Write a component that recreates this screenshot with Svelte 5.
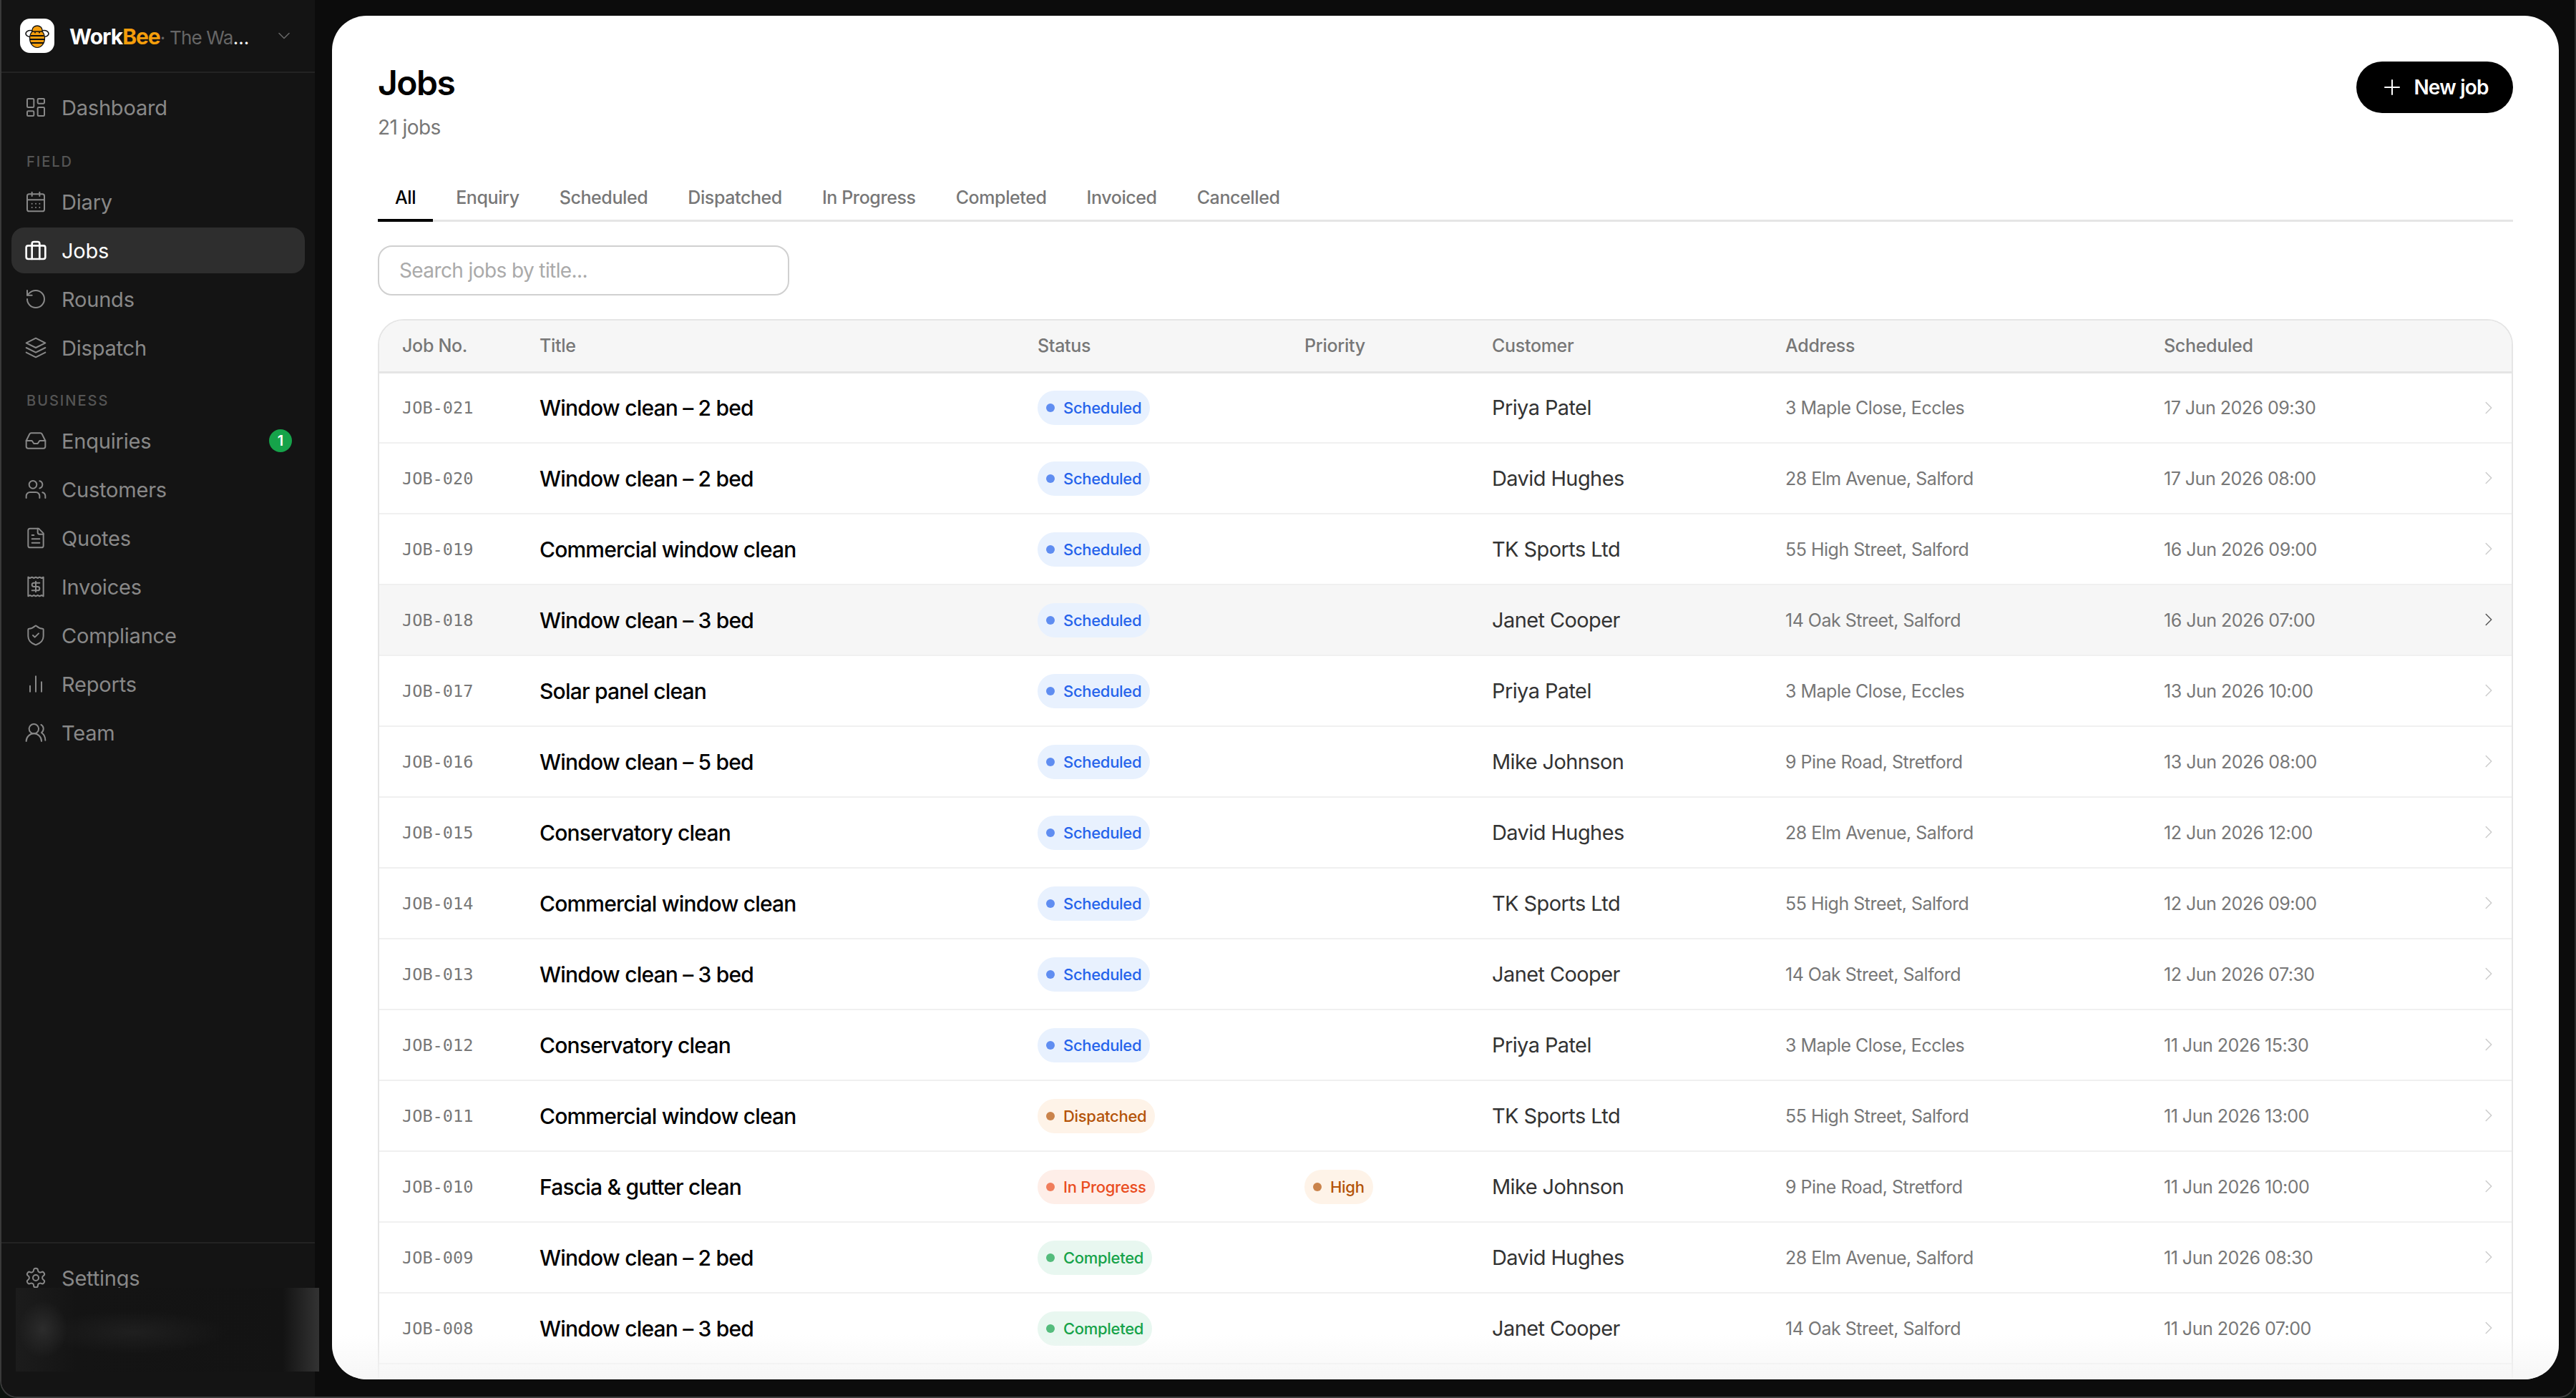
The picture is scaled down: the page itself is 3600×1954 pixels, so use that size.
<script>
  const icons = {
    dashboard: '<rect x="3" y="3" width="7" height="9" rx="1"/><rect x="14" y="3" width="7" height="5" rx="1"/><rect x="14" y="12" width="7" height="9" rx="1"/><rect x="3" y="16" width="7" height="5" rx="1"/>',
    diary: '<path d="M8 2v4M16 2v4"/><rect x="3" y="4" width="18" height="18" rx="2"/><path d="M3 10h18M8 14h.01M12 14h.01M16 14h.01M8 18h.01M12 18h.01M16 18h.01"/>',
    jobs: '<rect x="2" y="7" width="20" height="14" rx="2"/><path d="M16 21V5a2 2 0 0 0-2-2h-4a2 2 0 0 0-2 2v16"/>',
    rounds: '<path d="M3 12a9 9 0 1 0 9-9 9.75 9.75 0 0 0-6.74 2.74L3 8"/><path d="M3 3v5h5"/>',
    dispatch: '<path d="M12 2 2 7l10 5 10-5-10-5Z"/><path d="m2 17 10 5 10-5"/><path d="m2 12 10 5 10-5"/>',
    enquiries: '<polyline points="22 12 16 12 14 15 10 15 8 12 2 12"/><path d="M5.45 5.11 2 12v6a2 2 0 0 0 2 2h16a2 2 0 0 0 2-2v-6l-3.45-6.89A2 2 0 0 0 16.76 4H7.24a2 2 0 0 0-1.79 1.11z"/>',
    customers: '<path d="M16 21v-2a4 4 0 0 0-4-4H6a4 4 0 0 0-4 4v2"/><circle cx="9" cy="7" r="4"/><path d="M22 21v-2a4 4 0 0 0-3-3.87"/><path d="M16 3.13a4 4 0 0 1 0 7.75"/>',
    quotes: '<path d="M15 2H6a2 2 0 0 0-2 2v16a2 2 0 0 0 2 2h12a2 2 0 0 0 2-2V7Z"/><path d="M14 2v4a2 2 0 0 0 2 2h4"/><path d="M10 9H8M16 13H8M16 17H8"/>',
    invoices: '<path d="M4 2v20l2-1 2 1 2-1 2 1 2-1 2 1 2-1 2 1V2l-2 1-2-1-2 1-2-1-2 1-2-1-2 1Z"/><path d="M16 8h-6a2 2 0 1 0 0 4h4a2 2 0 1 1 0 4H8"/><path d="M12 17.5v-11"/>',
    compliance: '<path d="M20 13c0 5-3.5 7.5-7.66 8.95a1 1 0 0 1-.67-.01C7.5 20.5 4 18 4 13V6a1 1 0 0 1 1-1c2 0 4.5-1.2 6.24-2.72a1.17 1.17 0 0 1 1.52 0C14.51 3.81 17 5 19 5a1 1 0 0 1 1 1z"/><path d="m9 12 2 2 4-4"/>',
    reports: '<path d="M18 20V10M12 20V4M6 20v-6"/>',
    team: '<path d="M18 21a8 8 0 0 0-16 0"/><circle cx="10" cy="8" r="5"/><path d="M22 20c0-3.37-2-6.5-4-8a5 5 0 0 0-.45-8.3"/>',
    settings: '<path d="M12.22 2h-.44a2 2 0 0 0-2 2v.18a2 2 0 0 1-1 1.73l-.43.25a2 2 0 0 1-2 0l-.15-.08a2 2 0 0 0-2.73.73l-.22.38a2 2 0 0 0 .73 2.73l.15.1a2 2 0 0 1 1 1.72v.51a2 2 0 0 1-1 1.74l-.15.09a2 2 0 0 0-.73 2.73l.22.38a2 2 0 0 0 2.73.73l.15-.08a2 2 0 0 1 2 0l.43.25a2 2 0 0 1 1 1.73V20a2 2 0 0 0 2 2h.44a2 2 0 0 0 2-2v-.18a2 2 0 0 1 1-1.73l.43-.25a2 2 0 0 1 2 0l.15.08a2 2 0 0 0 2.73-.73l.22-.39a2 2 0 0 0-.73-2.73l-.15-.08a2 2 0 0 1-1-1.74v-.5a2 2 0 0 1 1-1.74l.15-.09a2 2 0 0 0 .73-2.73l-.22-.38a2 2 0 0 0-2.73-.73l-.15.08a2 2 0 0 1-2 0l-.43-.25a2 2 0 0 1-1-1.73V4a2 2 0 0 0-2-2z"/><circle cx="12" cy="12" r="3"/>'
  };

  const fieldNav = [
    { id: "diary", label: "Diary" },
    { id: "jobs", label: "Jobs", active: true },
    { id: "rounds", label: "Rounds" },
    { id: "dispatch", label: "Dispatch" }
  ];
  const businessNav = [
    { id: "enquiries", label: "Enquiries", badge: 1 },
    { id: "customers", label: "Customers" },
    { id: "quotes", label: "Quotes" },
    { id: "invoices", label: "Invoices" },
    { id: "compliance", label: "Compliance" },
    { id: "reports", label: "Reports" },
    { id: "team", label: "Team" }
  ];

  const tabs = ["All", "Enquiry", "Scheduled", "Dispatched", "In Progress", "Completed", "Invoiced", "Cancelled"];

  const addr = {
    "Priya Patel": "3 Maple Close, Eccles",
    "David Hughes": "28 Elm Avenue, Salford",
    "TK Sports Ltd": "55 High Street, Salford",
    "Janet Cooper": "14 Oak Street, Salford",
    "Mike Johnson": "9 Pine Road, Stretford"
  };

  const jobs = [
    ["JOB-021", "Window clean – 2 bed", "Scheduled", "", "Priya Patel", "17 Jun 2026 09:30"],
    ["JOB-020", "Window clean – 2 bed", "Scheduled", "", "David Hughes", "17 Jun 2026 08:00"],
    ["JOB-019", "Commercial window clean", "Scheduled", "", "TK Sports Ltd", "16 Jun 2026 09:00"],
    ["JOB-018", "Window clean – 3 bed", "Scheduled", "", "Janet Cooper", "16 Jun 2026 07:00"],
    ["JOB-017", "Solar panel clean", "Scheduled", "", "Priya Patel", "13 Jun 2026 10:00"],
    ["JOB-016", "Window clean – 5 bed", "Scheduled", "", "Mike Johnson", "13 Jun 2026 08:00"],
    ["JOB-015", "Conservatory clean", "Scheduled", "", "David Hughes", "12 Jun 2026 12:00"],
    ["JOB-014", "Commercial window clean", "Scheduled", "", "TK Sports Ltd", "12 Jun 2026 09:00"],
    ["JOB-013", "Window clean – 3 bed", "Scheduled", "", "Janet Cooper", "12 Jun 2026 07:30"],
    ["JOB-012", "Conservatory clean", "Scheduled", "", "Priya Patel", "11 Jun 2026 15:30"],
    ["JOB-011", "Commercial window clean", "Dispatched", "", "TK Sports Ltd", "11 Jun 2026 13:00"],
    ["JOB-010", "Fascia & gutter clean", "In Progress", "High", "Mike Johnson", "11 Jun 2026 10:00"],
    ["JOB-009", "Window clean – 2 bed", "Completed", "", "David Hughes", "11 Jun 2026 08:30"],
    ["JOB-008", "Window clean – 3 bed", "Completed", "", "Janet Cooper", "11 Jun 2026 07:00"],
    ["JOB-007", "Window clean – 2 bed", "Completed", "", "Priya Patel", "10 Jun 2026 09:00"]
  ];

  const tone = { Scheduled: "blue", Dispatched: "amber", "In Progress": "red", Completed: "green", High: "amber" };
</script>

{#snippet icon(id)}
  <svg class="nav-icon" viewBox="0 0 24 24" fill="none" stroke="currentColor" stroke-width="1.5" stroke-linecap="round" stroke-linejoin="round">{@html icons[id]}</svg>
{/snippet}

{#snippet navItem(item)}
  <div class="nav-item" class:active={item.active}>
    {@render icon(item.id)}
    <span>{item.label}</span>
    {#if item.badge}<b class="nav-badge">{item.badge}</b>{/if}
  </div>
{/snippet}

<div class="app">
  <aside class="sidebar">
    <div class="brand">
      <div class="logo">
        <svg viewBox="0 0 48 48" width="48" height="48">
          <ellipse cx="14.5" cy="21" rx="6.5" ry="4.5" fill="#fff" stroke="#111" stroke-width="1.6" />
          <ellipse cx="33.5" cy="21" rx="6.5" ry="4.5" fill="#fff" stroke="#111" stroke-width="1.6" />
          <ellipse cx="24" cy="27.5" rx="10.5" ry="13" fill="#f59e0b" stroke="#111" stroke-width="1.2" />
          <path d="M14.5 24h19M13.6 29h20.8M15 34h18" stroke="#111" stroke-width="2.2" />
          <path d="M17 16a7 6 0 0 1 14 0v2H17z" fill="#f59e0b" stroke="#111" stroke-width="1.4" />
          <circle cx="21" cy="19.5" r="1" fill="#111" /><circle cx="27" cy="19.5" r="1" fill="#111" />
        </svg>
      </div>
      <div class="brand-name"><strong>Work<em>Bee</em></strong><span> · The Wash Company</span></div>
      <svg class="brand-caret" viewBox="0 0 16 10" fill="none" stroke="currentColor" stroke-width="1.6" stroke-linecap="round" stroke-linejoin="round"><path d="m1 1.5 7 7 7-7" /></svg>
    </div>

    <nav class="nav">
      {@render navItem({ id: "dashboard", label: "Dashboard" })}
      <div class="nav-label field">FIELD</div>
      {#each fieldNav as item}{@render navItem(item)}{/each}
      <div class="nav-label">BUSINESS</div>
      {#each businessNav as item}{@render navItem(item)}{/each}
    </nav>

    <div class="side-foot">
      {@render navItem({ id: "settings", label: "Settings" })}
      <div class="copyright">© 2026 Xymer Ltd</div>
      <div class="redacted"></div>
    </div>
  </aside>

  <main class="content">
    <header class="page-head">
      <div>
        <h1>Jobs</h1>
        <p>21 jobs</p>
      </div>
      <button class="new-job">
        <svg viewBox="0 0 24 24" width="24" height="24" fill="none" stroke="currentColor" stroke-width="2" stroke-linecap="round"><path d="M12 2v20M2 12h20" /></svg>
        New job
      </button>
    </header>

    <div class="tabs">
      {#each tabs as tab, i}
        <div class="tab" class:current={i === 0}>{tab}</div>
      {/each}
    </div>

    <input class="search" placeholder="Search jobs by title..." />

    <div class="table-wrap">
      <table>
        <colgroup>
          <col style="width:192px" /><col style="width:696px" /><col style="width:373px" /><col style="width:262px" />
          <col style="width:410px" /><col style="width:529px" /><col />
        </colgroup>
        <thead>
          <tr><th>Job No.</th><th>Title</th><th>Status</th><th>Priority</th><th>Customer</th><th>Address</th><th>Scheduled</th></tr>
        </thead>
        <tbody>
          {#each jobs as [no, title, status, priority, customer, when]}
            <tr class:hover={no === "JOB-018"}>
              <td class="no">{no}</td>
              <td class="title">{title}</td>
              <td><span class="pill {tone[status]}"><i></i>{status}</span></td>
              <td>{#if priority}<span class="pill {tone[priority]}"><i></i>{priority}</span>{/if}</td>
              <td class="customer">{customer}</td>
              <td class="muted">{addr[customer]}</td>
              <td class="muted when">
                {when}
                <svg class="chev" viewBox="0 0 14 24" fill="none" stroke="currentColor" stroke-width="1.8" stroke-linecap="round" stroke-linejoin="round"><path d="m2.5 3 9 9-9 9" /></svg>
              </td>
            </tr>
          {/each}
        </tbody>
      </table>
    </div>
    <div class="fade"></div>
  </main>
</div>

<style>
  :global(body) {
    margin: 0;
    background: #0c130e;
  }

  .app {
    position: relative;
    display: flex;
    width: 3600px;
    height: 1954px;
    box-sizing: border-box;
    overflow: hidden;
    border: 2px solid #3a3a3a;
    border-top: 0;
    border-right-color: #2a2a2a;
    border-radius: 0 0 24px 24px;
    background: #0c0c0c;
    font-family: Inter, "Liberation Sans", sans-serif;
  }

  .sidebar {
    flex: none;
    width: 438px;
    display: flex;
    flex-direction: column;
    background: #141414;
    color: #888;
  }

  .brand {
    flex: none;
    height: 102px;
    box-sizing: border-box;
    padding: 26px 32px 0 26px;
    display: flex;
    align-items: flex-start;
    border-bottom: 2px solid #232323;
  }

  .logo {
    width: 48px;
    height: 48px;
    flex: none;
    border-radius: 14px;
    background: #fff;
  }

  .brand-name {
    width: 260px;
    margin-left: 21px;
    white-space: nowrap;
    overflow: hidden;
    text-overflow: ellipsis;
    line-height: 50px;
    color: #fff;
    font-size: 26px;
    letter-spacing: -0.8px;
  }

  .brand-name strong {
    font-size: 30px;
    font-weight: 700;
    letter-spacing: -1px;
  }

  .brand-name em {
    font-style: normal;
    color: #f59e0b;
  }

  .brand-name span {
    color: #666;
  }

  .brand-caret {
    width: 16px;
    height: 10px;
    margin: 19px 0 0 32px;
    color: #666;
  }

  .nav {
    flex: 1;
    padding: 16px 14px 0;
    display: flex;
    flex-direction: column;
    gap: 4px;
  }

  .nav-item {
    position: relative;
    height: 64px;
    flex: none;
    padding-left: 18px;
    display: flex;
    align-items: center;
    gap: 20px;
    border-radius: 18px;
    font-size: 29px;
    letter-spacing: -0.2px;
  }

  .nav-item.active {
    background: #2e2e2e;
    color: #fff;
  }

  .nav-item.active .nav-icon {
    stroke-width: 2;
  }

  .nav-icon {
    width: 32px;
    height: 32px;
    flex: none;
  }

  .nav-badge {
    position: absolute;
    right: 18px;
    top: 16px;
    width: 32px;
    height: 32px;
    border-radius: 50%;
    display: grid;
    place-items: center;
    background: #16a34a;
    color: #fff;
    font-size: 20px;
    font-weight: 600;
  }

  .nav-label {
    padding: 26px 0 8px 21px;
    color: #555;
    font-size: 20px;
    font-weight: 500;
    letter-spacing: 2px;
    line-height: 24px;
  }

  .nav-label.field {
    padding-top: 28px;
  }

  .side-foot {
    position: relative;
    height: 216px;
    flex: none;
    box-sizing: border-box;
    padding: 16px 14px 0;
    border-top: 2px solid #232323;
  }

  .copyright {
    margin: 43px 0 0 21px;
    color: #4a4a4a;
    font-size: 21px;
    line-height: 28px;
  }

  .redacted {
    position: absolute;
    left: 20px;
    top: 62px;
    width: 424px;
    height: 117px;
    background:
      radial-gradient(ellipse 34px 40px at 38px 58px, #2c2c2c, transparent),
      radial-gradient(ellipse 130px 30px at 165px 62px, #1f1f1f, transparent),
      linear-gradient(90deg, #1c1c1c, #141414 20%, #131313 88%, #333);
  }

  .content {
    position: absolute;
    left: 462px;
    top: 22px;
    width: 3112px;
    height: 1906px;
    box-sizing: border-box;
    padding: 64px 64px 0;
    overflow: hidden;
    border-radius: 48px;
    background: #fff;
    color: #000;
  }

  .page-head {
    display: flex;
    justify-content: space-between;
    align-items: flex-start;
    height: 156px;
  }

  h1 {
    margin: 0;
    font-size: 48px;
    line-height: 60px;
    font-weight: 600;
    letter-spacing: -1.5px;
  }

  .page-head p {
    margin: 14px 0 0;
    font-size: 28px;
    line-height: 36px;
    color: #777;
    letter-spacing: -0.6px;
  }

  .new-job {
    width: 219px;
    height: 72px;
    padding: 0 0 0 4px;
    display: flex;
    align-items: center;
    justify-content: center;
    gap: 18px;
    border: 0;
    border-radius: 36px;
    background: #000;
    color: #fff;
    font: 600 28px Inter, sans-serif;
    letter-spacing: -0.8px;
  }

  .tabs {
    display: flex;
    gap: 8px;
    height: 68px;
    box-sizing: border-box;
    border-bottom: 3px solid #e5e5e5;
  }

  .tab {
    height: 68px;
    box-sizing: border-box;
    padding: 14px 24px 0;
    font-size: 25px;
    line-height: 40px;
    font-weight: 500;
    letter-spacing: -0.4px;
    color: #777;
  }

  .tab.current {
    color: #000;
    border-bottom: 4px solid #000;
  }

  .search {
    display: block;
    width: 575px;
    height: 70px;
    box-sizing: border-box;
    margin: 33px 0;
    padding: 0 28px;
    border: 2px solid #d0d0d0;
    border-radius: 20px;
    font: 400 28px Inter, sans-serif;
    letter-spacing: -0.6px;
    outline: none;
  }

  .search::placeholder {
    color: #aaa;
  }

  .table-wrap {
    border: 2px solid #e5e5e5;
    border-radius: 36px 36px 0 0;
    overflow: hidden;
  }

  table {
    width: 100%;
    table-layout: fixed;
    border-collapse: collapse;
  }

  th {
    height: 72px;
    padding: 0 0 0 32px;
    box-sizing: border-box;
    text-align: left;
    background: #f6f6f6;
    border-bottom: 3px solid #e5e5e5;
    color: #777;
    font-size: 25px;
    font-weight: 500;
    letter-spacing: -0.3px;
  }

  td {
    height: 99px;
    padding: 0 0 0 32px;
    box-sizing: border-box;
    border-bottom: 2px solid #f0f0f0;
    white-space: nowrap;
    vertical-align: middle;
  }

  tr.hover td {
    background: #f6f6f6;
  }

  .no {
    font-family: "DejaVu Sans Mono", monospace;
    font-size: 23.6px;
    color: #777;
  }

  .title {
    font-size: 30px;
    font-weight: 500;
    letter-spacing: -0.8px;
  }

  .customer {
    font-size: 29px;
    color: #333;
    letter-spacing: -0.6px;
  }

  .muted {
    font-size: 25px;
    color: #777;
    letter-spacing: -0.5px;
  }

  .when {
    position: relative;
  }

  .chev {
    position: absolute;
    right: 26px;
    top: 38px;
    width: 12px;
    height: 20px;
    color: #ccc;
  }

  tr.hover .chev {
    color: #555;
  }

  .pill {
    display: inline-flex;
    align-items: center;
    gap: 12px;
    height: 48px;
    padding: 0 12px;
    border-radius: 24px;
    font-size: 22px;
    font-weight: 500;
    letter-spacing: -0.3px;
  }

  .pill i {
    width: 12px;
    height: 12px;
    border-radius: 50%;
    background: currentColor;
    opacity: 0.7;
  }

  .blue { background: #e8f1fe; color: #2563eb; }
  .amber { background: #fef3e8; color: #b45309; }
  .red { background: #feeee8; color: #ea4d1f; }
  .green { background: #e8f7f0; color: #16a34a; }

  .fade {
    position: absolute;
    left: 0;
    right: 0;
    bottom: 0;
    height: 62px;
    background: linear-gradient(rgba(245, 245, 245, 0), rgba(245, 245, 245, 0.9));
    pointer-events: none;
  }
</style>
